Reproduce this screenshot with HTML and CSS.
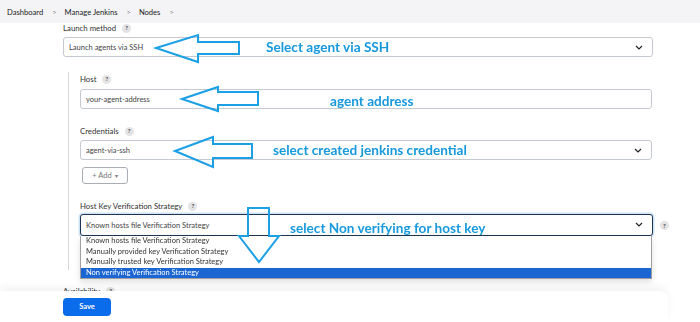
FILE: index.html
```html
<!DOCTYPE html>
<html>
<head>
<meta charset="utf-8">
<link rel="stylesheet" href="styles.css">
</head>
<body>
<header class="crumbs">
  <span class="crumb">Dashboard</span><span class="sep">&gt;</span>
  <span class="crumb">Manage Jenkins</span><span class="sep">&gt;</span>
  <span class="crumb">Nodes</span><span class="sep">&gt;</span>
</header>
<main class="main">
  <div class="label">Launch method <span class="help">?</span></div>
  <div class="control select">Launch agents via SSH<svg class="chev" viewBox="0 0 8 5" width="8" height="5"><path d="M1 1 L4 4 L7 1" fill="none" stroke="#222" stroke-width="1.2"/></svg></div>

  <section class="nested">
    <div class="label">Host <span class="help">?</span></div>
    <div class="control">your-agent-address</div>

    <div class="label gap">Credentials <span class="help">?</span></div>
    <div class="control select">agent-via-ssh<svg class="chev" viewBox="0 0 8 5" width="8" height="5"><path d="M1 1 L4 4 L7 1" fill="none" stroke="#222" stroke-width="1.2"/></svg></div>
    <button class="add">+ Add <span class="caret">&#9662;</span></button>

    <div class="label gap">Host Key Verification Strategy <span class="help">?</span></div>
    <div class="hk-row">
      <div class="hk-wrap">
        <div class="control select focused">Known hosts file Verification Strategy<svg class="chev" viewBox="0 0 8 5" width="8" height="5"><path d="M1 1 L4 4 L7 1" fill="none" stroke="#222" stroke-width="1.2"/></svg></div>
        <ul class="menu">
          <li>Known hosts file Verification Strategy</li>
          <li>Manually provided key Verification Strategy</li>
          <li>Manually trusted key Verification Strategy</li>
          <li class="sel">Non verifying Verification Strategy</li>
        </ul>
      </div>
      <span class="help">?</span>
    </div>
  </section>
  <div class="label avail">Availability <span class="help">?</span></div>
</main>
<footer class="bottom">
  <button class="save">Save</button>
</footer>

<svg class="marks" width="700" height="322" viewBox="0 0 700 322">
  <g fill="none" stroke="#1ba0e6" stroke-width="2" stroke-linejoin="miter">
    <polygon points="156,48 198,35 198,42 239,42 239,54 198,54 198,62"/>
    <polygon points="182,99 218,87 218,92 258,92 258,105 218,105 218,111"/>
    <polygon points="175,151 213,137 213,144 252,144 252,158 213,158 213,167"/>
    <polygon points="248,208 269,208 269,236 279,236 259,262 239,236 248,236"/>
  </g>
</svg>
<div class="note n1">Select agent via SSH</div>
<div class="note n2">agent address</div>
<div class="note n3">select created jenkins credential</div>
<div class="note n4">select Non verifying for host key</div>
</body>
</html>
```
FILE: styles.css
```css
html, body {
  margin: 0;
  padding: 0;
  width: 700px;
  height: 322px;
  overflow: hidden;
  background: #fff;
  font-family: Lato, "Noto Sans", sans-serif;
  color: #333;
}
.crumbs {
  height: 23px;
  background: #f4f4f6;
  display: flex;
  align-items: center;
  padding-left: 7px;
  font-size: 7.6px;
  color: #222;
}
.sep {
  color: #888;
  margin: 0 8px 0 9px;
}
.main {
  width: 590px;
  padding-left: 63px;
}
.label {
  height: 10px;
  line-height: 10px;
  font-size: 7.8px;
  color: #333;
  display: flex;
  align-items: center;
  gap: 6px;
  margin-bottom: 4px;
}
.help {
  display: inline-flex;
  align-items: center;
  justify-content: center;
  width: 9px;
  height: 9px;
  border-radius: 50%;
  background: #e4e4e6;
  color: #444;
  font-size: 6px;
  font-weight: bold;
  flex: none;
}
.control {
  box-sizing: border-box;
  height: 20px;
  border: 1px solid #c5cad0;
  border-radius: 3px;
  display: flex;
  align-items: center;
  padding-left: 5px;
  font-size: 7.5px;
  color: #444;
  position: relative;
  background: #fff;
}
.chev {
  position: absolute;
  right: 9px;
  top: 7px;
}
.nested {
  margin-left: 5px;
  margin-top: 15px;
  border-left: 1px solid #d6d8dc;
  padding: 2px 0 34px 11px;
  height: 162px;
}
.nested .control {
  width: 572px;
}
.label.gap {
  margin-top: 17px;
}
.nested .label:first-child {
  margin-bottom: 5px;
}
.add {
  box-sizing: border-box;
  display: flex;
  align-items: center;
  justify-content: center;
  gap: 3px;
  margin: 7px 0 0 2px;
  width: 46px;
  height: 17px;
  border: 1px solid #a9aeb4;
  border-radius: 3px;
  background: #fff;
  font-family: inherit;
  font-size: 7.5px;
  color: #777;
  padding: 0;
}
.caret {
  font-size: 6px;
}
.hk-row {
  display: flex;
  align-items: center;
  gap: 7px;
  margin-top: -1px;
}
.hk-wrap {
  position: relative;
  width: 573px;
}
.control.focused {
  width: 573px;
  height: 22px;
  border: 1.5px solid #1e3450;
  box-shadow: 0 0 0 1.5px #cde3f6;
}
.menu {
  position: absolute;
  left: 0;
  top: 22px;
  width: 572px;
  box-sizing: border-box;
  margin: 0;
  padding: 0;
  list-style: none;
  background: #fff;
  border: 1px solid #a0a0a0;
  border-top: none;
  box-shadow: 0 3px 6px rgba(0,0,0,0.12);
  font-size: 7.5px;
  color: #333;
  z-index: 2;
}
.menu li {
  height: 10.6px;
  line-height: 10.6px;
  padding-left: 5px;
  white-space: nowrap;
}
.menu li.sel {
  background: #1b66d2;
  color: #fff;
}
.label.avail {
  margin-top: 16px;
}
.bottom {
  position: fixed;
  left: 0;
  bottom: 0;
  width: 668px;
  height: 31px;
  background: #fff;
  border-radius: 0 8px 0 0;
  box-shadow: 0 -4px 8px rgba(0,0,0,0.05);
  display: flex;
  align-items: center;
  padding-left: 63px;
  box-sizing: border-box;
  z-index: 1;
}
.save {
  width: 48px;
  height: 18px;
  border: none;
  border-radius: 4px;
  background: #0a6cea;
  color: #fff;
  font-family: inherit;
  font-size: 7.5px;
  font-weight: bold;
  padding: 0;
}
.marks {
  position: absolute;
  left: 0;
  top: 0;
  pointer-events: none;
  z-index: 3;
}
.note {
  position: absolute;
  z-index: 3;
  font-family: Lato, "Open Sans", sans-serif;
  font-weight: bold;
  font-size: 13.6px;
  line-height: 16px;
  color: #1799dd;
  white-space: nowrap;
}
.n1 { left: 266px; top: 39px; }
.n2 { left: 330px; top: 93px; }
.n3 { left: 273px; top: 142px; }
.n4 { left: 290px; top: 220px; }
```
